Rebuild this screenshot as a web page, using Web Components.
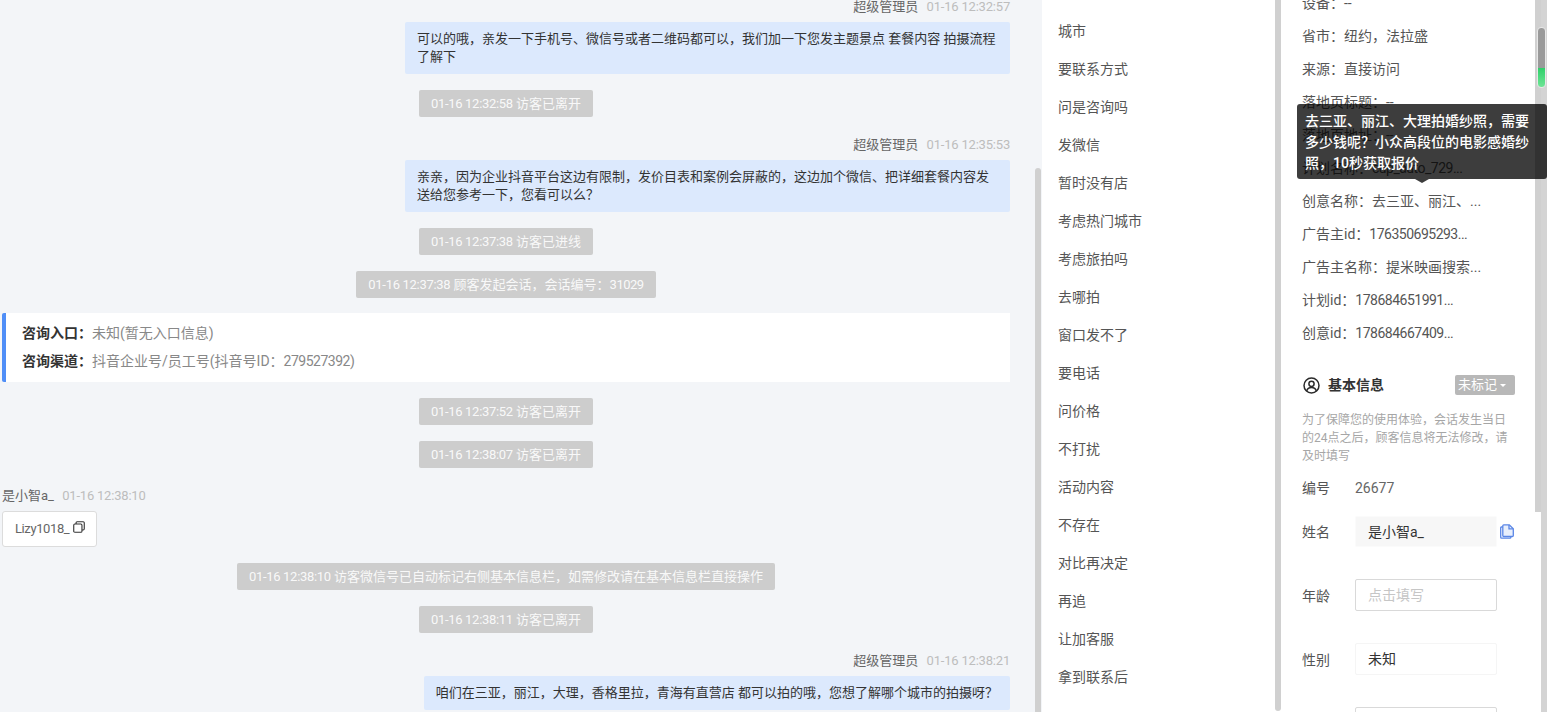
<!doctype html>
<html lang="zh">
<head>
<meta charset="utf-8">
<title>会话详情</title>
<style>
html, body { margin: 0; height: 712px; overflow: hidden; }
body { font: 13px/18px Roboto, "Noto Sans CJK SC", sans-serif; color: #333; }
</style>
</head>
<body>
<app-shell>
  <chat-log slot="chat">
    <msg-meta side="right" name="超级管理员" time="01-16 12:32:57"></msg-meta>
    <msg-bubble>可以的哦，亲发一下手机号、微信号或者二维码都可以，我们加一下您发主题景点 套餐内容 拍摄流程了解下</msg-bubble>
    <sys-pill time="01-16 12:32:58">访客已离开</sys-pill>
    <msg-meta side="right" name="超级管理员" time="01-16 12:35:53"></msg-meta>
    <msg-bubble>亲亲，因为企业抖音平台这边有限制，发价目表和案例会屏蔽的，这边加个微信、把详细套餐内容发送给您参考一下，您看可以么？</msg-bubble>
    <sys-pill time="01-16 12:37:38">访客已进线</sys-pill>
    <sys-pill time="01-16 12:37:38">顾客发起会话，会话编号：<num-text>31029</num-text></sys-pill>
    <source-card></source-card>
    <sys-pill time="01-16 12:37:52">访客已离开</sys-pill>
    <sys-pill time="01-16 12:38:07">访客已离开</sys-pill>
    <msg-meta name="是小智a_" time="01-16 12:38:10"></msg-meta>
    <wechat-chip>Lizy1018_</wechat-chip>
    <sys-pill time="01-16 12:38:10">访客微信号已自动标记右侧基本信息栏，如需修改请在基本信息栏直接操作</sys-pill>
    <sys-pill time="01-16 12:38:11">访客已离开</sys-pill>
    <msg-meta side="right" name="超级管理员" time="01-16 12:38:21"></msg-meta>
    <msg-bubble>咱们在三亚，丽江，大理，香格里拉，青海有直营店 都可以拍的哦，您想了解哪个城市的拍摄呀？</msg-bubble>
  </chat-log>

  <phrase-list slot="phrases">
    <phrase-item>城市</phrase-item>
    <phrase-item>要联系方式</phrase-item>
    <phrase-item>问是咨询吗</phrase-item>
    <phrase-item>发微信</phrase-item>
    <phrase-item>暂时没有店</phrase-item>
    <phrase-item>考虑热门城市</phrase-item>
    <phrase-item>考虑旅拍吗</phrase-item>
    <phrase-item>去哪拍</phrase-item>
    <phrase-item>窗口发不了</phrase-item>
    <phrase-item>要电话</phrase-item>
    <phrase-item>问价格</phrase-item>
    <phrase-item>不打扰</phrase-item>
    <phrase-item>活动内容</phrase-item>
    <phrase-item>不存在</phrase-item>
    <phrase-item>对比再决定</phrase-item>
    <phrase-item>再追</phrase-item>
    <phrase-item>让加客服</phrase-item>
    <phrase-item>拿到联系后</phrase-item>
  </phrase-list>

  <info-panel slot="info">
    <info-row>设备：--</info-row>
    <info-row>省市：纽约，法拉盛</info-row>
    <info-row>来源：直接访问</info-row>
    <info-row>落地页标题：--</info-row>
    <info-row>落地页地址：--</info-row>
    <info-row>计划名称：<num-text>cup_auto_729...</num-text></info-row>
    <info-row>创意名称：去三亚、丽江、...</info-row>
    <info-row>广告主id：<num-text>176350695293...</num-text></info-row>
    <info-row>广告主名称：提米映画搜索...</info-row>
    <info-row>计划id：<num-text>178684651991...</num-text></info-row>
    <info-row>创意id：<num-text>178684667409...</num-text></info-row>
    <section-head>基本信息</section-head>
    <form-note>为了保障您的使用体验，会话发生当日的24点之后，顾客信息将无法修改，请及时填写</form-note>
    <plain-field label="编号">26677</plain-field>
    <form-field label="姓名" kind="locked" copy>是小智a_</form-field>
    <form-field label="年龄" kind="empty">点击填写</form-field>
    <form-field label="性别" kind="soft">未知</form-field>
    <form-field label="" kind="empty"></form-field>
  </info-panel>

  <hint-tip slot="tip">去三亚、丽江、大理拍婚纱照，需要多少钱呢？小众高段位的电影感婚纱照，10秒获取报价</hint-tip>
</app-shell>

<script>
// small helper, every element just stamps its markup into an open shadow root
const shadow = (el, html) => {
  el.attachShadow({mode: 'open'}).innerHTML = html;
};

class AppShell extends HTMLElement {
  constructor() {
    super();
    shadow(this, `
<style>
:host { display: flex; position: relative; width: 1547px; height: 712px; overflow: hidden; background: #fff; }
.chat { display: flex; width: 1042px; height: 712px; background: #f3f5f8; flex: none; }
.chat .body { width: 1035px; height: 712px; overflow: hidden; flex: none; }
.rail { width: 6px; flex: none; }
.rail i { display: block; background: #d0d0d0; border-radius: 3px 3px 0 0; }
.chat .rail i { margin-top: 168px; height: 544px; }
.mid { width: 233px; flex: none; height: 712px; overflow: hidden; }
.mid-rail i { height: 711px; border-radius: 0 0 3px 3px; }
.info { width: 254px; flex: none; height: 712px; overflow: hidden; }
.right-rail i { height: 512px; border-radius: 0; }
.edge { width: 6px; flex: none; background: #d4d4d4; }
.level {
  position: absolute; left: 1537px; top: 27px; width: 7px; height: 59px; border-radius: 4px;
  border: 1px solid #e8e8e8;
  background: linear-gradient(#9a9a9a 0, #9a9a9a 40px, #2fcf6a 40px, #6fe596 100%);
}
</style>
<div class="chat"><div class="body"><slot name="chat"></slot></div><div class="rail"><i></i></div></div>
<div class="mid"><slot name="phrases"></slot></div>
<div class="rail mid-rail"><i></i></div>
<div class="info"><slot name="info"></slot></div>
<div class="rail right-rail"><i></i></div>
<div class="edge"></div>
<div class="level"></div>
<slot name="tip"></slot>`);
  }
}

// digits in the reference run tighter than Roboto
// no whitespace in this template: the host is inline, a newline would show as a gap
class NumText extends HTMLElement {
  constructor() {
    super();
    shadow(this, '<style>:host { letter-spacing: -.5px; }</style><slot></slot>');
  }
}

class ChatLog extends HTMLElement {
  constructor() {
    super();
    shadow(this, `
<style>
:host { display: flex; flex-direction: column; align-items: stretch; margin-top: -5px; padding: 0 25px 0 2px; }
</style>
<slot></slot>`);
  }
}

class MsgMeta extends HTMLElement {
  constructor() {
    super();
    const right = this.getAttribute('side') === 'right';
    shadow(this, `
<style>
:host { display: block; height: 20px; line-height: 23px; margin-bottom: 7px; color: #666; text-align: ${right ? 'right' : 'left'}; white-space: nowrap; }
.time { color: #bdbdbd; margin-left: 5px; letter-spacing: -.2px; }
</style>
<span>${this.getAttribute('name')}</span> <span class="time">${this.getAttribute('time')}</span>`);
  }
}

class MsgBubble extends HTMLElement {
  constructor() {
    super();
    shadow(this, `
<style>
:host { display: block; align-self: flex-end; box-sizing: border-box; max-width: 605px; padding: 8px 12px; margin-bottom: 16px; background: #dce9fd; border-radius: 2px; color: #333; }
</style>
<slot></slot>`);
  }
}

class SysPill extends HTMLElement {
  constructor() {
    super();
    shadow(this, `
<style>
:host { display: block; align-self: center; height: 27px; line-height: 27px; padding: 0 12px; margin-bottom: 16px; background: #cdcdcd; border-radius: 2px; color: rgba(255, 255, 255, .9); white-space: nowrap; }
.time { letter-spacing: -.3px; }
</style>
<span class="time">${this.getAttribute('time')}</span> <slot></slot>`);
  }
}

class SourceCard extends HTMLElement {
  constructor() {
    super();
    shadow(this, `
<style>
:host { display: block; box-sizing: border-box; height: 69px; margin: -1px 0 16px; padding: 6px 16px 7px; background: #fff; border-left: 4px solid #4f8ef7; border-radius: 2px 0 0 2px; color: #888; font-size: 14px; }
div { height: 28px; line-height: 28px; white-space: nowrap; }
b { color: #333; font-weight: 700; }
</style>
<div><b>咨询入口：</b>未知(暂无入口信息)</div>
<div><b>咨询渠道：</b>抖音企业号/员工号(抖音号ID：<num-text>279527392)</num-text></div>`);
  }
}

class WechatChip extends HTMLElement {
  constructor() {
    super();
    shadow(this, `
<style>
:host { display: flex; align-items: center; align-self: flex-start; box-sizing: border-box; width: 95px; height: 36px; padding: 0 0 0 12px; margin-bottom: 16px; background: #fff; border: 1px solid #dcdcdc; border-radius: 3px; color: #666; letter-spacing: -.4px; }
svg { width: 12px; height: 12px; margin: -4px 0 0 4px; flex: none; }
</style>
<slot></slot>
<svg viewBox="0 0 13 13" fill="none" stroke="#333" stroke-width="1.200">
  <rect x=".8" y="3.300" width="8.900" height="8.900" rx="1.200"/>
  <path d="M3.300 3.300V2A1.200 1.200 0 0 1 4.500.8H11A1.200 1.200 0 0 1 12.200 2V8.500A1.200 1.200 0 0 1 11 9.700H9.700"/>
</svg>`);
  }
}

class PhraseList extends HTMLElement {
  constructor() {
    super();
    shadow(this, `
<style>
:host { display: block; padding: 12px 0 0 16px; }
</style>
<slot></slot>`);
  }
}

class PhraseItem extends HTMLElement {
  constructor() {
    super();
    shadow(this, `
<style>
:host { display: block; height: 38px; line-height: 38px; color: #555; font-size: 14px; white-space: nowrap; }
</style>
<slot></slot>`);
  }
}

class InfoPanel extends HTMLElement {
  constructor() {
    super();
    shadow(this, `
<style>
:host { display: block; margin-top: -13px; padding: 0 20px 0 21px; }
</style>
<slot></slot>`);
  }
}

class InfoRow extends HTMLElement {
  constructor() {
    super();
    shadow(this, `
<style>
:host { display: block; height: 33px; line-height: 33px; color: #555; font-size: 14px; white-space: nowrap; }
</style>
<slot></slot>`);
  }
}

class SectionHead extends HTMLElement {
  constructor() {
    super();
    shadow(this, `
<style>
:host { display: flex; align-items: center; height: 20px; margin-top: 25px; font-size: 14px; font-weight: 700; color: #333; }
svg { width: 17px; height: 17px; margin-right: 8px; flex: none; margin-left: 1px; }
.tag { margin-left: auto; display: flex; align-items: center; box-sizing: border-box; padding-left: 3px; width: 60px; height: 20px; background: #b8b8b8; border-radius: 2px; color: #fff; font-size: 13px; font-weight: 400; }
.tag i { width: 0; height: 0; margin: 1px 0 0 3px; border: 3.5px solid transparent; border-top-color: #fff; border-bottom: 0; }
</style>
<svg viewBox="0 0 17 17" fill="none" stroke="#2b2b2b" stroke-width="1.500">
  <circle cx="8.500" cy="8.500" r="7.500"/>
  <circle cx="8.500" cy="6.800" r="2.600"/>
  <path d="M3.600 14.200c.7-2.400 2.600-3.600 4.900-3.600s4.200 1.200 4.900 3.600"/>
</svg>
<slot></slot>
<span class="tag">未标记<i></i></span>`);
  }
}

class FormNote extends HTMLElement {
  constructor() {
    super();
    shadow(this, `
<style>
:host { display: block; width: 213px; margin-top: 16px; font-size: 12px; line-height: 18px; color: #a6a6a6; }
</style>
<slot></slot>`);
  }
}

class PlainField extends HTMLElement {
  constructor() {
    super();
    shadow(this, `
<style>
:host { display: flex; height: 18px; margin: 14px 0 18px; color: #666; font-size: 14px; }
span { width: 53px; flex: none; color: #555; }
</style>
<span>${this.getAttribute('label')}</span><slot></slot>`);
  }
}

class FormField extends HTMLElement {
  constructor() {
    super();
    const copy = this.hasAttribute('copy');
    shadow(this, `
<style>
:host { display: flex; align-items: center; height: 32px; margin-bottom: 32px; color: #555; font-size: 14px; }
.label { width: 53px; flex: none; position: relative; top: 1px; }
.box { box-sizing: border-box; display: flex; align-items: center; width: 142px; height: 32px; padding: 0 12px; border: 1px solid transparent; border-radius: 2px; color: #333; flex: none; }
:host([kind="locked"]) .box { background: #f7f7f7; border-color: #fbfbfb; height: 31px; margin-top: 1px; }
:host([kind="empty"]) .box { border-color: #d9d9d9; color: #c6c6c6; }
:host([kind="soft"]) .box { border-color: #f5f5f5; }
svg { width: 14px; height: 15px; margin-left: 3px; flex: none; }
</style>
<span class="label">${this.getAttribute('label')}</span>
<div class="box"><slot></slot></div>
${copy ? `<svg viewBox="0 0 14 15" fill="none" stroke="#5a86e6" stroke-width="1.300">
  <path d="M2.800 3H1.400a.8.8 0 0 0-.7.800v9.500c0 .5.300.9.800.9H10a.8.8 0 0 0 .8-.8v-1"/>
  <path d="M2.800 1.800c0-.6.400-1 1-1h5.500l4 4V11.500c0 .6-.4 1-1 1H3.800c-.6 0-1-.4-1-1z" fill="#e8effc"/>
  <path d="M9 1v3.800h4"/>
</svg>` : ''}`);
  }
}

class HintTip extends HTMLElement {
  constructor() {
    super();
    shadow(this, `
<style>
:host { position: absolute; left: 1297px; top: 104px; box-sizing: border-box; width: 250px; height: 75px; padding: 7px 8px 5px; background: rgba(0, 0, 0, .76); border-radius: 3px; color: #fff; font-size: 14px; line-height: 21px; font-weight: 500; }
:host::after { content: ""; position: absolute; left: 118px; top: 75px; border: 7px solid transparent; border-top: 4px solid rgba(0, 0, 0, .76); border-bottom: 0; }
</style>
<slot></slot>`);
  }
}

customElements.define('app-shell', AppShell);
customElements.define('num-text', NumText);
customElements.define('chat-log', ChatLog);
customElements.define('msg-meta', MsgMeta);
customElements.define('msg-bubble', MsgBubble);
customElements.define('sys-pill', SysPill);
customElements.define('source-card', SourceCard);
customElements.define('wechat-chip', WechatChip);
customElements.define('phrase-list', PhraseList);
customElements.define('phrase-item', PhraseItem);
customElements.define('info-panel', InfoPanel);
customElements.define('info-row', InfoRow);
customElements.define('section-head', SectionHead);
customElements.define('form-note', FormNote);
customElements.define('plain-field', PlainField);
customElements.define('form-field', FormField);
customElements.define('hint-tip', HintTip);
</script>
</body>
</html>
